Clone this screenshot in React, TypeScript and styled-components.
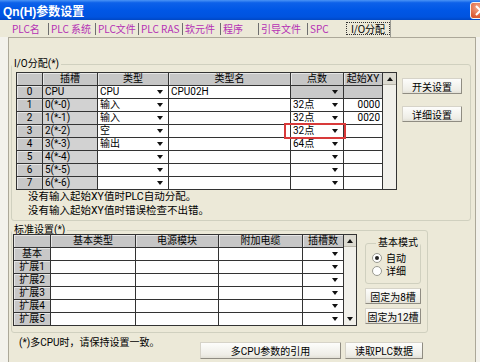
import React from "react";
import styled, { createGlobalStyle } from "styled-components";

const GlobalStyle = createGlobalStyle`
  html, body {
    margin: 0;
    padding: 0;
    background: #ece9d8;
  }
  body {
    font-family: Roboto, "Noto Sans CJK SC", sans-serif;
    font-size: 10px;
    color: #000;
  }
  * {
    box-sizing: border-box;
  }
`;

type Tone = "head" | "side" | "slot" | "edit" | "off";

const ioRows = [
  { no: "0", slot: "CPU", type: "CPU", model: "CPU02H", pts: "", xy: "", off: true },
  { no: "1", slot: "0(*-0)", type: "输入", model: "", pts: "32点", xy: "0000" },
  { no: "2", slot: "1(*-1)", type: "输入", model: "", pts: "32点", xy: "0020" },
  { no: "3", slot: "2(*-2)", type: "空", model: "", pts: "32点", xy: "", mark: true },
  { no: "4", slot: "3(*-3)", type: "输出", model: "", pts: "64点", xy: "" },
  { no: "5", slot: "4(*-4)", type: "", model: "", pts: "", xy: "" },
  { no: "6", slot: "5(*-5)", type: "", model: "", pts: "", xy: "" },
  { no: "7", slot: "6(*-6)", type: "", model: "", pts: "", xy: "" },
];

const baseRows = ["基本", "扩展1", "扩展2", "扩展3", "扩展4", "扩展5"];

const tabs = [
  { label: "PLC名", w: 40 },
  { label: "PLC 系统", w: 47 },
  { label: "PLC文件", w: 43 },
  { label: "PLC RAS", w: 44 },
  { label: "软元件", w: 38 },
  { label: "程序", w: 38 },
  { label: "引导文件", w: 49 },
  { label: "SPC", w: 38 },
];

const App = () => {
  return (
    <Window>
      <GlobalStyle />
      <TitleBar>
        <span>Qn(H)参数设置</span>
        <CloseButton>
          <svg width="19" height="15" viewBox="0 0 19 15">
            <path d="M5 3 L14 12 M14 3 L5 12" stroke="#fff" strokeWidth="2" />
          </svg>
        </CloseButton>
      </TitleBar>

      <TabStrip>
        {tabs.map((t, i) => (
          <Tab key={t.label} $w={t.w} $first={i === 0}>
            {t.label}
          </Tab>
        ))}
        <ActiveTab>
          <FocusLabel>I/O分配</FocusLabel>
        </ActiveTab>
      </TabStrip>

      <PageArea>
        <Page>
          <Group $w={460} $mt={18}>
            <GroupLegend $lh={16}>I/O分配(*)</GroupLegend>
            <GroupBody $pl={4} $pr={0} $pb={2}>
              <div>
                <TableWrap>
                  <Grid $cols="25px 54px 70px 121px 52px 38px">
                    <Cell $tone="head" />
                    <Cell $tone="head">插槽</Cell>
                    <Cell $tone="head">类型</Cell>
                    <Cell $tone="head">类型名</Cell>
                    <Cell $tone="head">点数</Cell>
                    <Cell $tone="head">起始XY</Cell>
                    {ioRows.map((r) => (
                      <React.Fragment key={r.no}>
                        <Cell $tone="side">{r.no}</Cell>
                        <Cell $tone="slot">{r.slot}</Cell>
                        <Cell $tone="edit">
                          {r.type}
                          <DownArrow />
                        </Cell>
                        <Cell $tone="edit">{r.model}</Cell>
                        <Cell $tone={r.off ? "off" : "edit"} $marked={r.mark}>
                          {r.pts}
                          <DownArrow />
                          {r.mark && <Mark />}
                        </Cell>
                        <Cell $tone={r.off ? "off" : "edit"} $align="right">
                          {r.xy}
                        </Cell>
                      </React.Fragment>
                    ))}
                  </Grid>
                  <ScrollBar $w={14}>
                    <ScrollButton>
                      <UpArrow />
                    </ScrollButton>
                  </ScrollBar>
                </TableWrap>
                <Notes>
                  <div>没有输入起始XY值时PLC自动分配。</div>
                  <div>没有输入起始XY值时错误检查不出错。</div>
                </Notes>
              </div>
              <SideColumn $ml={5} $pt={6} $gap={12} $w={60}>
                <Button>开关设置</Button>
                <Button>详细设置</Button>
              </SideColumn>
            </GroupBody>
          </Group>

          <Group $w={417} $mt={5}>
            <GroupLegend $lh={8}>标准设置(*)</GroupLegend>
            <GroupBody $pl={1} $pr={6} $pb={6}>
              <TableWrap>
                <Grid $cols="36px 84px 82px 83px 40px">
                  <Cell $tone="head" />
                  <Cell $tone="head">基本类型</Cell>
                  <Cell $tone="head">电源模块</Cell>
                  <Cell $tone="head">附加电缆</Cell>
                  <Cell $tone="head">插槽数</Cell>
                  {baseRows.map((r) => (
                    <React.Fragment key={r}>
                      <Cell $tone="side">{r}</Cell>
                      <Cell $tone="edit" />
                      <Cell $tone="edit" />
                      <Cell $tone="edit" />
                      <Cell $tone="edit">
                        <DownArrow />
                      </Cell>
                    </React.Fragment>
                  ))}
                </Grid>
                <ScrollBar $w={13}>
                  <ScrollButton>
                    <UpArrow />
                  </ScrollButton>
                  <ScrollButton $flat>
                    <DownArrow />
                  </ScrollButton>
                </ScrollBar>
              </TableWrap>
              <SideColumn $ml={8} $pt={5} $gap={4} $w={56}>
                <ModeBox>
                  <GroupLegend $lh={8} $ml={4}>
                    基本模式
                  </GroupLegend>
                  <RadioRow>
                    <RadioDot $on />
                    自动
                  </RadioRow>
                  <RadioRow>
                    <RadioDot />
                    详细
                  </RadioRow>
                </ModeBox>
                <Button>固定为8槽</Button>
                <Button>固定为12槽</Button>
              </SideColumn>
            </GroupBody>
          </Group>

          <BottomRow>
            <BottomNote>(*)多CPU时，请保持设置一致。</BottomNote>
            <Button $h={17}>多CPU参数的引用</Button>
            <Button $h={17}>读取PLC数据</Button>
          </BottomRow>
        </Page>
      </PageArea>
    </Window>
  );
};

const Window = styled.div`
  width: 480px;
  height: 362px;
  overflow: hidden;
  display: flex;
  flex-direction: column;
  background: #ece9d8;
`;

const TitleBar = styled.div`
  flex: none;
  height: 20px;
  display: flex;
  align-items: center;
  justify-content: space-between;
  padding-left: 3px;
  background: linear-gradient(
    #4a94f6 0%,
    #0d61e9 14%,
    #0057e6 50%,
    #0053df 85%,
    #0047c4 100%
  );
  color: #fff;
  font-family: "Liberation Sans", "Noto Sans CJK SC", sans-serif;
  font-weight: bold;
  font-size: 12px;
  white-space: nowrap;
`;

const CloseButton = styled.div`
  flex: none;
  width: 21px;
  height: 17px;
  margin-right: -11px;
  border: 1px solid #f4f4f4;
  border-radius: 3px;
  background: radial-gradient(circle at 35% 30%, #f3a88c, #dc5a32 60%, #c4411c);
  display: flex;
  align-items: center;
  justify-content: center;
`;

const TabStrip = styled.div`
  flex: none;
  height: 17px;
  display: flex;
  align-items: center;
  padding-left: 8px;
  font-family: "Noto Sans CJK SC", sans-serif;
`;

const Tab = styled.div<{ $w: number; $first?: boolean }>`
  flex: none;
  width: ${(p) => p.$w}px;
  height: 12px;
  line-height: 12px;
  padding-left: ${(p) => (p.$first ? 4 : 2)}px;
  border-left: ${(p) => (p.$first ? "none" : "1px solid #6e6e6e")};
  color: #b531b5;
  white-space: nowrap;
`;

const ActiveTab = styled.div`
  flex: none;
  height: 17px;
  display: flex;
  align-items: center;
  padding-left: 1px;
  border-right: 1px solid #9a9a92;
`;

const FocusLabel = styled.span`
  width: 44px;
  height: 13px;
  line-height: 11px;
  border: 1px dotted #333;
  text-align: center;
  white-space: nowrap;
`;

const PageArea = styled.div`
  flex: 1;
  display: flex;
  padding: 0 4px 0 8px;
  background: #f3f2ec;
`;

const Page = styled.div`
  flex: 1;
  display: flex;
  flex-direction: column;
  align-items: flex-start;
  padding: 0 4px 0 2px;
  background: #ece9d8;
  border-top: 1px solid #aca899;
  border-left: 1px solid #aca899;
  border-right: 1px solid #aca899;
`;

const Group = styled.fieldset<{ $w: number; $mt: number }>`
  width: ${(p) => p.$w}px;
  margin: ${(p) => p.$mt}px 0 0 0;
  padding: 0;
  min-width: 0;
  border: 1px solid #d0d0bf;
  border-radius: 3px;
`;

const GroupLegend = styled.legend<{ $lh: number; $ml?: number }>`
  padding: 0 2px;
  margin-left: ${(p) => p.$ml ?? 0}px;
  line-height: ${(p) => p.$lh}px;
  white-space: nowrap;
`;

const GroupBody = styled.div<{ $pl: number; $pr: number; $pb: number }>`
  display: flex;
  align-items: flex-start;
  padding: 0 ${(p) => p.$pr}px ${(p) => p.$pb}px ${(p) => p.$pl}px;
`;

const TableWrap = styled.div`
  display: flex;
  align-items: stretch;
`;

const Grid = styled.div<{ $cols: string }>`
  display: grid;
  grid-template-columns: ${(p) => p.$cols};
  grid-auto-rows: 12px;
  gap: 1px;
  background: #333;
  border: 1px solid #333;
`;

const toneBg: Record<Tone, string> = {
  head: "#c6c6c6",
  side: "#c8c8c8",
  slot: "#d2d2d2",
  edit: "#ffffff",
  off: "#c9c9c9",
};

const Cell = styled.div<{ $tone: Tone; $align?: "left" | "right"; $marked?: boolean }>`
  position: ${(p) => (p.$marked ? "relative" : "static")};
  display: flex;
  align-items: center;
  justify-content: ${(p) =>
    p.$tone === "head" || p.$tone === "side"
      ? "center"
      : p.$align === "right"
      ? "flex-end"
      : "flex-start"};
  padding: 0 ${(p) => (p.$tone === "head" ? 0 : 2)}px;
  height: 12px;
  line-height: 12px;
  white-space: nowrap;
  background: ${(p) => toneBg[p.$tone]};
  box-shadow: ${(p) =>
    p.$tone === "head" || p.$tone === "side" ? "inset 1px 1px 0 #e6e6e6" : "none"};
`;

const DownArrow = styled.span`
  flex: none;
  margin-left: auto;
  margin-right: 3px;
  width: 0;
  height: 0;
  border-left: 3px solid transparent;
  border-right: 3px solid transparent;
  border-top: 4px solid #111;
`;

const UpArrow = styled.span`
  width: 0;
  height: 0;
  border-left: 3px solid transparent;
  border-right: 3px solid transparent;
  border-bottom: 4px solid #111;
`;

const Mark = styled.span`
  position: absolute;
  z-index: 2;
  left: -7px;
  right: -3px;
  top: -2px;
  bottom: -2px;
  border: 2px solid #d83a3a;
`;

const ScrollBar = styled.div<{ $w: number }>`
  flex: none;
  width: ${(p) => p.$w}px;
  display: flex;
  flex-direction: column;
  justify-content: space-between;
  background: #f1f0ea;
  border-top: 1px solid #333;
  border-bottom: 1px solid #333;
  border-right: 1px solid #333;
`;

const ScrollButton = styled.div<{ $flat?: boolean }>`
  height: 12px;
  display: flex;
  align-items: center;
  justify-content: center;
  background: ${(p) => (p.$flat ? "#f1f0ea" : "#dcdad0")};
  border-bottom: ${(p) => (p.$flat ? "none" : "1px solid #b9b6aa")};

  & > span {
    margin: 0;
  }
`;

const Notes = styled.div`
  padding-left: 12px;
  line-height: 14px;
  font-size: 10.5px;
  white-space: nowrap;
`;

const SideColumn = styled.div<{ $ml: number; $pt: number; $gap: number; $w: number }>`
  flex: none;
  width: ${(p) => p.$w}px;
  margin-left: ${(p) => p.$ml}px;
  padding-top: ${(p) => p.$pt}px;
  display: flex;
  flex-direction: column;
  gap: ${(p) => p.$gap}px;
`;

const Button = styled.div<{ $h?: number }>`
  height: ${(p) => p.$h ?? 16}px;
  display: flex;
  align-items: center;
  justify-content: center;
  white-space: nowrap;
  background: linear-gradient(#fdfdfb, #eeede6 80%, #e2e0d6);
  border: 1px solid #d6d3c8;
  border-right-color: #8f8c82;
  border-bottom-color: #8f8c82;
  border-radius: 1px;
`;

const ModeBox = styled.fieldset`
  margin: 0;
  padding: 4px 0 6px 6px;
  min-width: 0;
  border: 1px solid #d0d0bf;
  border-radius: 3px;
`;

const RadioRow = styled.div`
  display: flex;
  align-items: center;
  gap: 4px;
  height: 13px;
  white-space: nowrap;
`;

const RadioDot = styled.span<{ $on?: boolean }>`
  flex: none;
  width: 10px;
  height: 10px;
  border-radius: 50%;
  border: 1px solid #9a9a90;
  background: #fff;
  display: flex;
  align-items: center;
  justify-content: center;

  &::after {
    content: "";
    width: 4px;
    height: 4px;
    border-radius: 50%;
    background: ${(p) => (p.$on ? "#222" : "transparent")};
  }
`;

const BottomRow = styled.div`
  margin-top: 2px;
  padding-left: 8px;
  display: grid;
  grid-template-columns: 177px 141px 78px;
  column-gap: 4px;
  align-items: start;

  & > div:not(:first-child) {
    margin-top: 7px;
  }
`;

const BottomNote = styled.span`
  line-height: 16px;
  white-space: nowrap;
`;

export default App;
